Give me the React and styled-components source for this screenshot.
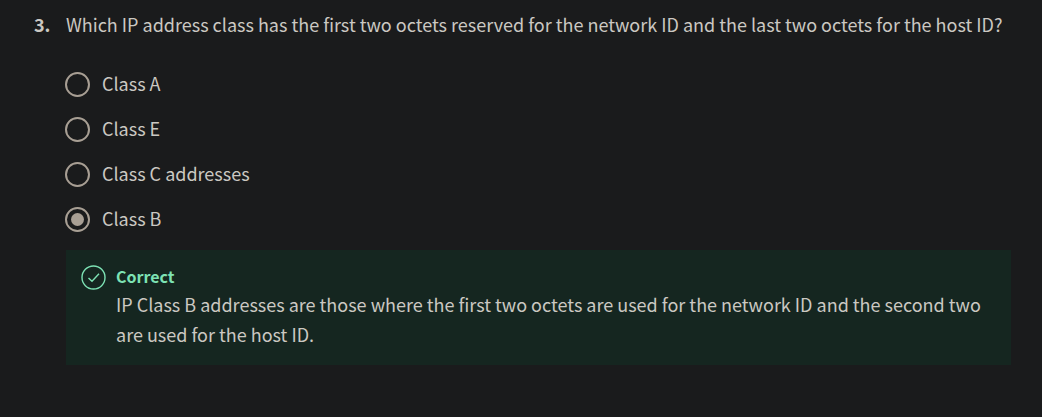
import React from "react";
import styled, { createGlobalStyle } from "styled-components";

const GlobalStyle = createGlobalStyle`
  *, *::before, *::after { box-sizing: border-box; }
  html { background: #1a1b1c; }
  body {
    margin: 0;
    background: #1a1b1c;
    color: #cbc8c2;
    font-family: "Source Sans Pro", "Noto Sans CJK SC", sans-serif;
    font-size: 18px;
    line-height: 30px;
  }
`;

const Page = styled.main`
  padding: 9px 31px 48px 34px;
`;

const Question = styled.fieldset`
  min-width: 0;
  margin: 0;
  padding: 0;
  border: 0;
`;

const Prompt = styled.legend`
  display: flex;
  width: 100%;
  padding: 0;
`;

const Number = styled.span`
  flex: 0 0 32px;
  font-weight: 700;
`;

const Body = styled.div`
  padding: 29px 0 0 32px;
`;

const Options = styled.div`
  display: grid;
  gap: 13px;
  margin-bottom: 15px;
`;

const Option = styled.label`
  display: flex;
  align-items: center;
  gap: 12px;
  width: fit-content;
  cursor: pointer;
`;

const OptionText = styled.span`
  padding-bottom: 2px;
`;

const Radio = styled.input`
  appearance: none;
  display: grid;
  place-items: center;
  flex: none;
  width: 25px;
  height: 25px;
  margin: 0 0 0 -1px;
  border: 2px solid #a89f94;
  border-radius: 50%;
  cursor: inherit;

  &:checked::before {
    content: "";
    width: 13px;
    height: 13px;
    border-radius: 50%;
    background: #a89f94;
  }
`;

const Feedback = styled.section`
  display: flex;
  gap: 10px;
  padding: 13px 15px 16px;
  background: #152620;
`;

const CheckIcon = styled.svg`
  flex: none;
  width: 25px;
  height: 25px;
  margin-top: 2px;
  fill: none;
  stroke: #7de2b4;
`;

const FeedbackTitle = styled.h2`
  margin: 0;
  color: #7de2b4;
  font-size: 16px;
  line-height: 26px;
  font-weight: 700;
`;

const FeedbackText = styled.p`
  margin: 0;
`;

const choices = ["Class A", "Class E", "Class C addresses", "Class B"];

export default function App() {
  const [selected, setSelected] = React.useState("Class B");
  return (
    <>
      <GlobalStyle />
      <Page>
        <Question>
          <Prompt>
            <Number>3.</Number>
            <span>
              Which IP address class has the first two octets reserved for the
              network ID and the last two octets for the host ID?
            </span>
          </Prompt>
          <Body>
            <Options>
              {choices.map((choice) => (
                <Option key={choice}>
                  <Radio
                    type="radio"
                    name="ip-class"
                    value={choice}
                    checked={selected === choice}
                    onChange={() => setSelected(choice)}
                  />
                  <OptionText>{choice}</OptionText>
                </Option>
              ))}
            </Options>
            <Feedback>
              <CheckIcon viewBox="0 0 25 25" aria-hidden="true">
                <circle cx="12.5" cy="12.5" r="11.5" strokeWidth="1.4" />
                <path d="M7.5 13 L11 16.3 L18 8.7" strokeWidth="1.4" />
              </CheckIcon>
              <div>
                <FeedbackTitle>Correct</FeedbackTitle>
                <FeedbackText>
                  IP Class B addresses are those where the first two octets are
                  used for the network ID and the second two are used for the
                  host ID.
                </FeedbackText>
              </div>
            </Feedback>
          </Body>
        </Question>
      </Page>
    </>
  );
}
